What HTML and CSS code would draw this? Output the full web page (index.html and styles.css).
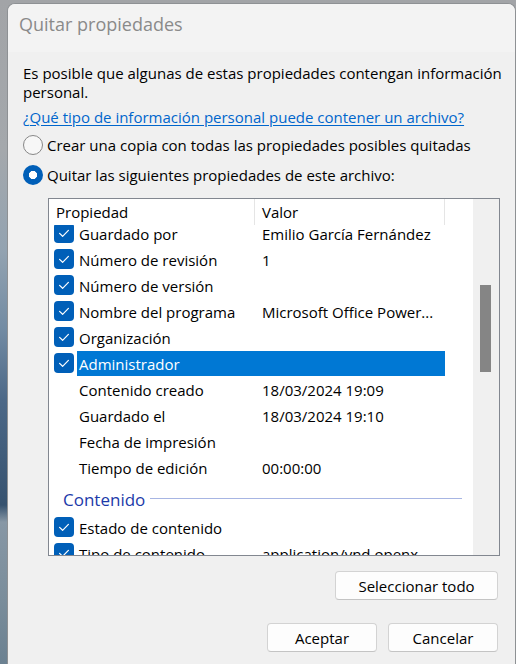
FILE: index.html
```html
<!DOCTYPE html>
<html lang="es">
<head>
<meta charset="utf-8">
<title>Quitar propiedades</title>
<link rel="stylesheet" href="styles.css">
</head>
<body>
<div class="window">
  <div class="titlebar">Quitar propiedades</div>
  <div class="content">
    <p class="intro">Es posible que algunas de estas propiedades contengan información<br>personal.</p>
    <a class="link" href="#">¿Qué tipo de información personal puede contener un archivo?</a>
    <div class="radios">
      <label class="radio"><span class="radio-circle"></span>Crear una copia con todas las propiedades posibles quitadas</label>
      <label class="radio"><span class="radio-circle checked"></span>Quitar las siguientes propiedades de este archivo:</label>
    </div>
    <div class="listbox">
      <div class="list-main">
        <div class="list-header">
          <div class="hcol hcol-prop">Propiedad</div>
          <div class="hcol hcol-val">Valor</div>
          <div class="hcol hcol-rest"></div>
        </div>
        <div class="list-rows">
          <div class="row first">
            <span class="cb"><svg viewBox="0 0 20 20"><path d="M5.6 10.4 L8.6 13.3 L14.4 7.4"/></svg></span>
            <span class="cells"><span class="cell-label">Guardado por</span><span class="cell-value">Emilio García Fernández</span></span>
          </div>
          <div class="row">
            <span class="cb"><svg viewBox="0 0 20 20"><path d="M5.6 10.4 L8.6 13.3 L14.4 7.4"/></svg></span>
            <span class="cells"><span class="cell-label">Número de revisión</span><span class="cell-value">1</span></span>
          </div>
          <div class="row">
            <span class="cb"><svg viewBox="0 0 20 20"><path d="M5.6 10.4 L8.6 13.3 L14.4 7.4"/></svg></span>
            <span class="cells"><span class="cell-label">Número de versión</span><span class="cell-value"></span></span>
          </div>
          <div class="row">
            <span class="cb"><svg viewBox="0 0 20 20"><path d="M5.6 10.4 L8.6 13.3 L14.4 7.4"/></svg></span>
            <span class="cells"><span class="cell-label">Nombre del programa</span><span class="cell-value">Microsoft Office Power...</span></span>
          </div>
          <div class="row">
            <span class="cb"><svg viewBox="0 0 20 20"><path d="M5.6 10.4 L8.6 13.3 L14.4 7.4"/></svg></span>
            <span class="cells"><span class="cell-label">Organización</span><span class="cell-value"></span></span>
          </div>
          <div class="row">
            <span class="cb"><svg viewBox="0 0 20 20"><path d="M5.6 10.4 L8.6 13.3 L14.4 7.4"/></svg></span>
            <span class="cells selected"><span class="cell-label">Administrador</span><span class="cell-value"></span></span>
          </div>
          <div class="row">
            <span class="cb none"></span>
            <span class="cells"><span class="cell-label">Contenido creado</span><span class="cell-value">18/03/2024 19:09</span></span>
          </div>
          <div class="row">
            <span class="cb none"></span>
            <span class="cells"><span class="cell-label">Guardado el</span><span class="cell-value">18/03/2024 19:10</span></span>
          </div>
          <div class="row">
            <span class="cb none"></span>
            <span class="cells"><span class="cell-label">Fecha de impresión</span><span class="cell-value"></span></span>
          </div>
          <div class="row">
            <span class="cb none"></span>
            <span class="cells"><span class="cell-label">Tiempo de edición</span><span class="cell-value">00:00:00</span></span>
          </div>
          <div class="group"><span class="group-title">Contenido</span><span class="group-line"></span></div>
          <div class="row">
            <span class="cb"><svg viewBox="0 0 20 20"><path d="M5.6 10.4 L8.6 13.3 L14.4 7.4"/></svg></span>
            <span class="cells"><span class="cell-label">Estado de contenido</span><span class="cell-value"></span></span>
          </div>
          <div class="row">
            <span class="cb"><svg viewBox="0 0 20 20"><path d="M5.6 10.4 L8.6 13.3 L14.4 7.4"/></svg></span>
            <span class="cells"><span class="cell-label">Tipo de contenido</span><span class="cell-value">application/vnd.openx...</span></span>
          </div>
        </div>
      </div>
      <div class="scrollbar"><div class="thumb"></div></div>
    </div>
    <div class="select-row"><button class="btn btn-wide" type="button">Seleccionar todo</button></div>
    <div class="footer">
      <button class="btn" type="button">Aceptar</button>
      <button class="btn" type="button">Cancelar</button>
    </div>
  </div>
</div>
</body>
</html>
```

FILE: styles.css
```css
* { box-sizing: border-box; }
html, body { margin: 0; padding: 0; }
body {
  width: 516px;
  height: 664px;
  overflow: hidden;
  background: linear-gradient(180deg, #a2a4a7 0px, #a4a8ac 150px, #93a3b1 250px, #728ba3 330px, #4c6887 400px, #36526f 505px, #8797a5 522px, #7a8d9b 600px, #6b8191 664px);
  font-family: "Open Sans", sans-serif;
  font-size: 15px;
  color: #000;
}
.window {
  margin: 3px 0 0 7px;
  width: 509px;
  height: 661px;
  background: #f0f0f0;
  border: 1px solid #8e9194;
  border-bottom: none;
  border-radius: 8px 8px 0 0;
  overflow: hidden;
}
.titlebar {
  height: 48px;
  padding: 8px 0 0 11px;
  background: #f3f3f3;
  color: #8a8a8a;
  font-size: 18px;
  line-height: normal;
}
.content {
  padding: 0 0 0 15px;
  width: 490px;
}
.intro {
  margin: 12px 0 0 0;
  line-height: 19px;
  white-space: nowrap;
}
.link {
  display: block;
  margin-top: 6px;
  line-height: 19px;
  color: #0066cc;
  text-decoration: underline;
  text-underline-offset: 2px;
  white-space: nowrap;
}
.radios {
  margin-top: 3px;
  display: flex;
  flex-direction: column;
}
.radio {
  height: 30px;
  display: flex;
  align-items: center;
  gap: 4px;
  white-space: nowrap;
}
.radio-circle {
  width: 20px;
  height: 20px;
  border-radius: 50%;
  border: 1px solid #878787;
  background: #f7f7f7;
  flex: none;
}
.radio-circle.checked {
  border: none;
  background: radial-gradient(circle, #ffffff 0 3.8px, #005fb8 4.4px);
}
.listbox {
  margin: 8px 0 0 25px;
  width: 452px;
  height: 358px;
  border: 1px solid #828790;
  background: #ffffff;
  display: flex;
}
.list-main {
  flex: 1;
  display: flex;
  flex-direction: column;
  min-width: 0;
}
.list-header {
  height: 26px;
  display: flex;
  flex: none;
  background: #fff;
  position: relative;
  z-index: 1;
}
.hcol {
  padding: 3px 0 0 7px;
  line-height: 20px;
}
.hcol-prop { width: 206px; border-right: 1px solid #e5e5e5; }
.hcol-val { width: 190px; border-right: 1px solid #e5e5e5; }
.hcol-rest { flex: 1; }
.list-rows {
  flex: 1;
  overflow: hidden;
}
.row {
  height: 26px;
  display: flex;
  align-items: center;
}
.row.first { margin-top: -5px; }
.cb {
  width: 20px;
  height: 20px;
  margin-left: 5px;
  border-radius: 4px;
  background: #005fb8;
  flex: none;
  display: flex;
}
.cb.none { background: transparent; }
.cb svg {
  width: 20px;
  height: 20px;
  fill: none;
  stroke: #ffffff;
  stroke-width: 1.2;
  stroke-linecap: round;
  stroke-linejoin: round;
}
.cells {
  margin-left: 3px;
  width: 368px;
  height: 25px;
  margin-top: 1px;
  display: flex;
  align-items: center;
  white-space: nowrap;
}
.cells.selected {
  background: #0078d4;
  color: #ffffff;
}
.cell-label { width: 178px; padding-left: 2px; overflow: hidden; }
.cell-value { width: 190px; padding-left: 7px; overflow: hidden; }
.group {
  height: 34px;
  display: flex;
  align-items: center;
  padding: 4px 11px 0 14px;
  gap: 5px;
}
.group-title {
  color: #1c3aa9;
  font-size: 17px;
}
.group-line {
  flex: 1;
  height: 1px;
  background: #a7b5e3;
  margin-top: -2px;
}
.scrollbar {
  width: 26px;
  flex: none;
  background: #f0f0f0;
  padding: 86px 0 0 7px;
}
.thumb {
  width: 11px;
  height: 87px;
  background: #858585;
}
.select-row {
  margin-top: 15px;
  width: 475px;
  display: flex;
  justify-content: flex-end;
}
.btn {
  height: 29px;
  width: 110px;
  font-family: inherit;
  font-size: 15px;
  color: #000;
  background: #fdfdfd;
  border: 1px solid #d3d3d3;
  border-bottom-color: #c4c4c4;
  border-radius: 4px;
  padding: 0;
}
.btn-wide { width: 163px; }
.footer {
  margin-top: 23px;
  width: 475px;
  display: flex;
  justify-content: flex-end;
  gap: 11px;
}
```
